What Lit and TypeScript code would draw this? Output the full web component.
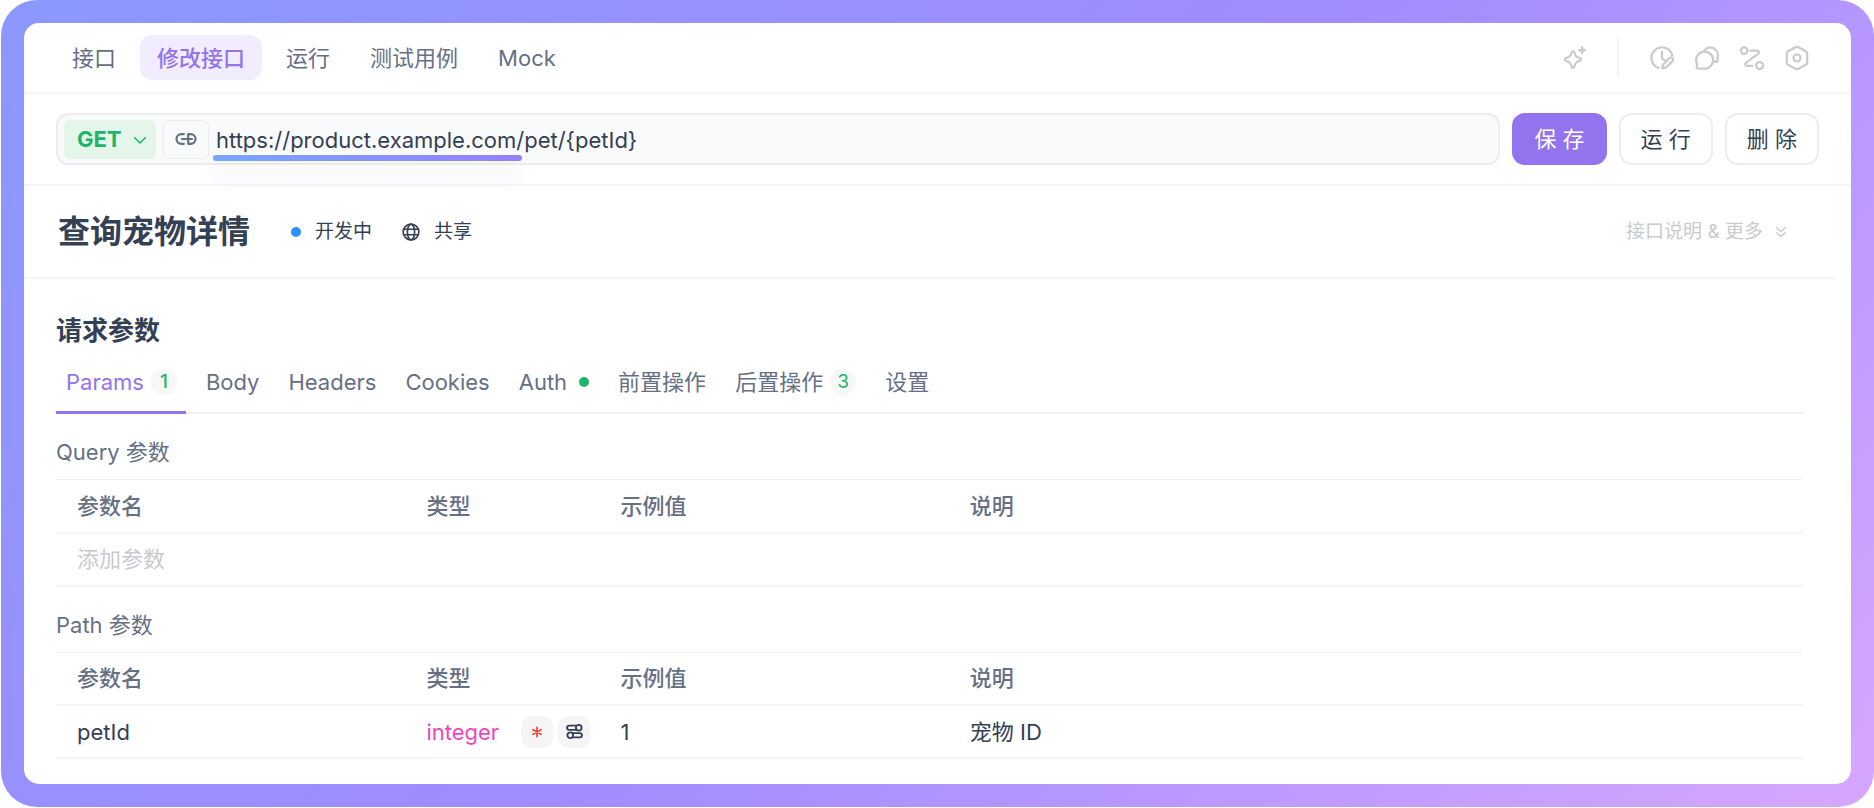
import { LitElement, html, css, svg, nothing } from "lit";
import { customElement, property } from "lit/decorators.js";
import { classMap } from "lit/directives/class-map.js";

const icons = {
  sparkle: svg`<path d="M11 5.2c.9 0 1.2.6 1.5 1.7 1 3.2 1.7 3.9 5 5 1.1.4 1.6.8 1.6 1.6s-.5 1.2-1.6 1.6c-3.3 1.1-4 1.8-5 5-.3 1.1-.6 1.7-1.5 1.7s-1.2-.6-1.5-1.7c-1-3.2-1.7-3.9-5-5-1.1-.4-1.6-.8-1.6-1.6s.5-1.2 1.6-1.6c3.3-1.1 4-1.8 5-5 .3-1.1.6-1.7 1.5-1.7z"/><path stroke-width="2.6" d="M20 1.5v5.4M17.3 4.2h5.4"/>`,
  history: svg`<path d="M22.3 9.2A10.6 10.6 0 1 0 8.800 22M12 5.400v7.200l2.600 1.500"/><path d="M12.300 22.400l.6-3.600 6.600-6.700a2.100 2.100 0 0 1 3 3l-6.700 6.600z"/>`,
  chat: svg`<path d="M9.600 22.600a8.500 8.500 0 1 0-7.400-4.400L1.600 21.300c-.1.700.3 1.100 1 1.100z"/><path d="M9.400 4.400a7.600 7.600 0 0 1 13.100 7.300l.1 3c0 .6-.5 1.100-1.100 1h-2.700"/>`,
  flow: svg`<circle cx="4.200" cy="4.600" r="3.300"/><circle cx="19.600" cy="19.600" r="3.500"/><path d="M10.200 4.600h6.600c2.300 0 2.800 1.900 1.200 3.200L6.200 16.700c-1.700 1.300-1.200 3.200 1.100 3.200h5"/>`,
  settings: svg`<path d="M10.600 1.200a3 3 0 0 1 2.800 0l7.400 4.100a2.600 2.600 0 0 1 1.400 2.300v8.800a2.600 2.600 0 0 1-1.400 2.300l-7.400 4.100a3 3 0 0 1-2.800 0l-7.400-4.100a2.600 2.600 0 0 1-1.400-2.300V7.600a2.600 2.600 0 0 1 1.400-2.300z"/><circle cx="12" cy="12" r="3.500"/>`,
  link: svg`<path d="M9.800 7.200H7.300a4.800 4.800 0 0 0 0 9.600h2.500M14.200 7.200v9.600h2.500a4.800 4.800 0 0 0 0-9.600zM8 12h10"/>`,
  globe: svg`<circle cx="12" cy="12" r="10.500"/><ellipse cx="12" cy="12" rx="4.800" ry="10.500"/><path d="M2.500 8.300h19M2.500 15.700h19"/>`,
  down: svg`<path d="M3 8l9 9 9-9"/>`,
  doubleDown: svg`<path d="M3 3l9 8 9-8M3 13l9 8 9-8"/>`,
  required: svg`<path d="M12 3v18M4 7.500l16 9M20 7.500l-16 9"/>`,
  toggles: svg`<path d="M14.500 3.700H4.500a3 3 0 0 0 0 6h10M9.500 14.300h10a3 3 0 0 1 0 6h-10"/><circle cx="18" cy="6.700" r="4"/><circle cx="6" cy="17.300" r="4"/>`,
};

type IconName = keyof typeof icons;

@customElement("ui-icon")
export class UiIcon extends LitElement {
  static styles = css`
    :host {
      display: inline-flex;
      flex: none;
      width: 24px;
      height: 24px;
    }
    .glyph {
      width: 100%;
      height: 100%;
      overflow: visible;
      fill: none;
      stroke: currentColor;
      stroke-linecap: round;
      stroke-linejoin: round;
    }
  `;

  @property() name: IconName = "link";
  @property({ type: Number }) weight = 2.2;

  render() {
    return html`<svg class="glyph" viewBox="0 0 24 24" stroke-width=${this.weight} aria-hidden="true">
      ${icons[this.name]}
    </svg>`;
  }
}

interface Param {
  name: string;
  type: string;
  example: string;
  description: string;
}

@customElement("param-table")
export class ParamTable extends LitElement {
  static styles = css`
    :host {
      display: block;
    }
    .table {
      width: 100%;
      border-collapse: collapse;
      table-layout: fixed;
      text-align: left;
      font-size: 22px;
      line-height: 32px;
      color: #344054;
    }
    .caption {
      padding: 22px 0 11px;
      text-align: left;
      color: #667085;
    }
    .name,
    .example {
      width: 20%;
    }
    .type {
      width: 194px;
    }
    .row {
      height: 53px;
      border-top: 1px solid #f0f1f6;
      border-bottom: 2px solid #f5f5f8;
    }
    .cell {
      padding: 0;
      font-weight: 400;
    }
    .cell:first-child {
      padding-left: 21px;
    }
    .cell.head {
      color: #667085;
      font-weight: 500;
    }
    .add {
      display: block;
      width: 100%;
      padding: 0;
      border: 0;
      outline: 0;
      background: none;
      color: #344054;
      font: inherit;
    }
    .add::placeholder {
      color: #c8cad0;
      opacity: 1;
    }
    .kind {
      display: flex;
      align-items: center;
      gap: 5px;
    }
    .kind-name {
      margin-right: 17px;
      color: #ee46bc;
    }
    .chip {
      display: flex;
      align-items: center;
      justify-content: center;
      width: 32px;
      height: 32px;
      padding: 0;
      border: 0;
      border-radius: 10px;
      background: #f5f5f5;
      color: #344054;
    }
    .chip.required {
      color: #f5483b;
    }
    .small {
      width: 12px;
      height: 12px;
    }
    .medium {
      width: 17px;
      height: 17px;
    }
  `;

  @property() caption = "";
  @property({ attribute: false }) rows: Param[] = [];

  render() {
    return html`
      <table class="table">
        <caption class="caption">${this.caption}</caption>
        <thead>
          <tr class="row">
            <th class="cell head name" scope="col">参数名</th>
            <th class="cell head type" scope="col">类型</th>
            <th class="cell head example" scope="col">示例值</th>
            <th class="cell head" scope="col">说明</th>
          </tr>
        </thead>
        <tbody>
          ${this.rows.length
            ? this.rows.map(
                (row) => html`<tr class="row">
                  <td class="cell">${row.name}</td>
                  <td class="cell">
                    <div class="kind">
                      <span class="kind-name">${row.type}</span>
                      <button class="chip required" aria-label="必填">
                        <ui-icon class="small" name="required" .weight=${3.6}></ui-icon>
                      </button>
                      <button class="chip" aria-label="高级设置">
                        <ui-icon class="medium" name="toggles" .weight=${2.6}></ui-icon>
                      </button>
                    </div>
                  </td>
                  <td class="cell">${row.example}</td>
                  <td class="cell">${row.description}</td>
                </tr>`
              )
            : html`<tr class="row">
                <td class="cell" colspan="4">
                  <input class="add" placeholder="添加参数" aria-label="添加参数" />
                </td>
              </tr>`}
        </tbody>
      </table>
    `;
  }
}

interface RequestTab {
  label: string;
  count?: number;
  dot?: boolean;
}

@customElement("app-root")
export class AppRoot extends LitElement {
  static styles = css`
    :host {
      display: block;
      min-height: 100vh;
      box-sizing: border-box;
      padding: 0 0 1px 1px;
      background: #fff;
      color: #344054;
      font-family: Inter, "Noto Sans CJK SC", sans-serif;
      font-size: 22px;
      line-height: 32px;
    }
    button,
    select,
    input {
      box-sizing: border-box;
      margin: 0;
      border: 0;
      background: none;
      color: inherit;
      font: inherit;
      outline: 0;
    }
    .frame {
      padding: 23px;
      border-radius: 36px;
      background: linear-gradient(135deg, #8b98ff 0%, #a08bff 50%, #d6a7ff 100%);
    }
    .panel {
      padding-bottom: 25px;
      border-radius: 15px;
      background: #fff;
    }
    .topbar {
      display: flex;
      align-items: center;
      justify-content: space-between;
      padding: 12px 42px 12px 32px;
      border-bottom: 2px solid #f5f5f8;
    }
    .tabs,
    .tools {
      display: flex;
      align-items: center;
    }
    .tabs {
      gap: 8px;
    }
    .tab {
      height: 45px;
      padding: 0 16px;
      border-radius: 12px;
      color: #667085;
    }
    .tab.active {
      padding: 0 17px;
      background: #f2edfe;
      color: #9373ee;
      font-weight: 500;
    }
    .tools {
      gap: 21px;
      color: #c8cad0;
    }
    .tool {
      display: flex;
      padding: 0;
    }
    .divider {
      width: 2px;
      height: 39px;
      margin: 0 10px;
      background: #f4f3fb;
    }
    .request {
      display: flex;
      gap: 12px;
      padding: 19px 32px 19px;
      border-bottom: 2px solid #f5f5f8;
    }
    .url {
      display: flex;
      flex: 1;
      align-items: center;
      gap: 7px;
      box-sizing: border-box;
      height: 52px;
      padding: 0 6px;
      border: 2px solid #ececf1;
      border-radius: 12px;
      background: #f9fafc;
    }
    .method {
      position: relative;
      display: flex;
      color: #1cb56a;
    }
    .method-select {
      width: 92px;
      height: 39px;
      padding: 0 0 0 13px;
      border-radius: 6px;
      background: #e4f5ea;
      font-weight: 700;
      appearance: none;
    }
    .method-icon {
      position: absolute;
      top: 13px;
      right: 9px;
      width: 14px;
      height: 14px;
      pointer-events: none;
    }
    .link {
      display: flex;
      align-items: center;
      justify-content: center;
      width: 46px;
      height: 39px;
      padding: 0;
      border: 1px solid #ececf1;
      border-radius: 6px;
      color: #667085;
    }
    .address {
      position: relative;
      flex: 1;
    }
    .address-input {
      display: block;
      width: 100%;
      height: 39px;
      padding: 2px 0 0;
    }
    .highlight {
      position: absolute;
      top: 35px;
      left: -3px;
      width: 309px;
      height: 6px;
      border-radius: 3px;
      background: linear-gradient(90deg, #78a6ff, #967ffa);
      box-shadow: 0 16px 16px rgba(80, 60, 160, 0.1);
    }
    .action {
      height: 52px;
      padding: 0 20px;
      border: 2px solid #ececf3;
      border-radius: 13px;
      background: #fff;
      white-space: pre;
    }
    .action.primary {
      border-color: #9373ee;
      background: #9373ee;
      color: #fff;
    }
    .summary {
      display: flex;
      align-items: center;
      justify-content: space-between;
      margin-right: 16px;
      padding: 23px 48px 22px 34px;
      border-bottom: 2px solid #f5f5f8;
      font-size: 19px;
    }
    .heading,
    .status,
    .more {
      display: flex;
      align-items: center;
    }
    .title {
      margin: 0 41px 0 0;
      font-size: 32px;
      line-height: 46px;
      font-weight: 600;
    }
    .status {
      gap: 14px;
      padding: 0;
    }
    .status + .status {
      margin-left: 30px;
    }
    .dot {
      width: 10px;
      height: 10px;
      border-radius: 50%;
      background: #2e90fa;
    }
    .globe {
      width: 18px;
      height: 18px;
    }
    .more {
      gap: 12px;
      padding: 0;
      color: #c8cad0;
    }
    .more-icon {
      width: 12px;
      height: 12px;
    }
    .content {
      padding: 35px 48px 0 32px;
    }
    .section {
      margin: 0;
      font-size: 26px;
      line-height: 34px;
      font-weight: 600;
    }
    .params-tabs {
      display: flex;
      gap: 10px;
      margin-top: 8px;
      border-bottom: 2px solid #f3f3f6;
    }
    .params-tab {
      display: flex;
      align-items: center;
      height: 58px;
      margin-bottom: -2px;
      padding: 0 9px 4px 10px;
      border-bottom: 3px solid transparent;
      color: #667085;
    }
    .params-tab.active {
      border-radius: 3px 3px 0 0;
      border-color: #9373ee;
      color: #9373ee;
    }
    .count {
      width: 26px;
      height: 26px;
      margin-left: 7px;
      border-radius: 50%;
      background: #f7f7f7;
      color: #1cb56a;
      font-size: 19px;
      line-height: 26px;
      text-align: center;
    }
    .active .count {
      font-weight: 500;
    }
    .live {
      width: 10px;
      height: 10px;
      margin-left: 12px;
      border-radius: 50%;
      background: #1cb56a;
    }
  `;

  private pages = ["接口", "修改接口", "运行", "测试用例", "Mock"];
  private activePage = "修改接口";

  private tools: { icon: IconName; label: string }[] = [
    { icon: "history", label: "修改历史" },
    { icon: "chat", label: "评论" },
    { icon: "flow", label: "引用关系" },
    { icon: "settings", label: "接口设置" },
  ];

  private requestTabs: RequestTab[] = [
    { label: "Params", count: 1 },
    { label: "Body" },
    { label: "Headers" },
    { label: "Cookies" },
    { label: "Auth", dot: true },
    { label: "前置操作" },
    { label: "后置操作", count: 3 },
    { label: "设置" },
  ];

  private pathParams: Param[] = [
    { name: "petId", type: "integer", example: "1", description: "宠物 ID" },
  ];

  render() {
    return html`
      <div class="frame">
        <main class="panel">
          <header class="topbar">
            <nav class="tabs">
              ${this.pages.map(
                (page) =>
                  html`<button class=${classMap({ tab: true, active: page === this.activePage })}>${page}</button>`
              )}
            </nav>
            <div class="tools">
              <button class="tool" aria-label="AI"><ui-icon name="sparkle"></ui-icon></button>
              <span class="divider"></span>
              ${this.tools.map(
                (tool) =>
                  html`<button class="tool" aria-label=${tool.label}><ui-icon name=${tool.icon}></ui-icon></button>`
              )}
            </div>
          </header>

          <section class="request">
            <div class="url">
              <div class="method">
                <select class="method-select" aria-label="请求方法">
                  <option>GET</option>
                </select>
                <ui-icon class="method-icon" name="down" .weight=${2.6}></ui-icon>
              </div>
              <button class="link" aria-label="前置 URL"><ui-icon name="link"></ui-icon></button>
              <div class="address">
                <input
                  class="address-input"
                  aria-label="请求地址"
                  spellcheck="false"
                  value="https://product.example.com/pet/{petId}"
                />
                <span class="highlight"></span>
              </div>
            </div>
            <button class="action primary">保 存</button>
            <button class="action">运 行</button>
            <button class="action">删 除</button>
          </section>

          <section class="summary">
            <div class="heading">
              <h1 class="title">查询宠物详情</h1>
              <button class="status"><span class="dot"></span>开发中</button>
              <button class="status"><ui-icon class="globe" name="globe"></ui-icon>共享</button>
            </div>
            <button class="more">
              接口说明 &amp; 更多
              <ui-icon class="more-icon" name="doubleDown" .weight=${2.6}></ui-icon>
            </button>
          </section>

          <section class="content">
            <h2 class="section">请求参数</h2>
            <nav class="params-tabs">
              ${this.requestTabs.map(
                (tab, index) => html`<button class=${classMap({ "params-tab": true, active: index === 0 })}>
                  ${tab.label}
                  ${tab.count ? html`<span class="count">${tab.count}</span>` : nothing}
                  ${tab.dot ? html`<span class="live"></span>` : nothing}
                </button>`
              )}
            </nav>
            <param-table .caption=${"Query 参数"}></param-table>
            <param-table .caption=${"Path 参数"} .rows=${this.pathParams}></param-table>
          </section>
        </main>
      </div>
    `;
  }
}
